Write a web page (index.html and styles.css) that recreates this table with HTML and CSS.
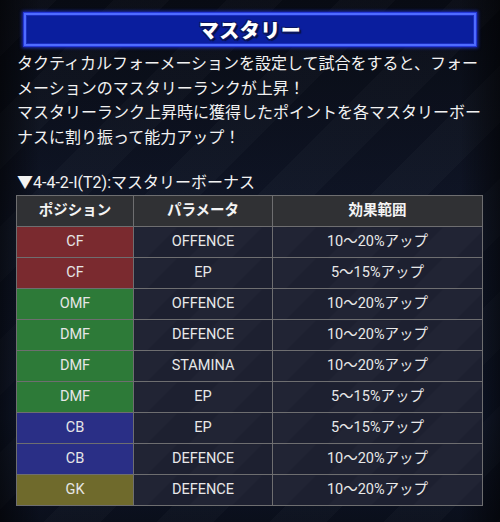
FILE: index.html
```html
<!DOCTYPE html>
<html lang="ja">
<head>
<meta charset="utf-8">
<title>マスタリー</title>
<link rel="stylesheet" href="styles.css">
</head>
<body>
<div class="page">
  <div class="title-bar"><span class="title-text">マスタリー</span></div>
  <p class="intro">タクティカルフォーメーションを設定して試合をすると、フォー<br>メーションのマスタリーランクが上昇！<br>マスタリーランク上昇時に獲得したポイントを各マスタリーボー<br>ナスに割り振って能力アップ！</p>
  <h2 class="section-head">▼4-4-2-I(T2):マスタリーボーナス</h2>
  <table class="bonus">
    <thead>
      <tr><th class="c1">ポジション</th><th class="c2">パラメータ</th><th class="c3">効果範囲</th></tr>
    </thead>
    <tbody>
      <tr><td class="pos red">CF</td><td>OFFENCE</td><td>10〜20%アップ</td></tr>
      <tr><td class="pos red">CF</td><td>EP</td><td>5〜15%アップ</td></tr>
      <tr><td class="pos green">OMF</td><td>OFFENCE</td><td>10〜20%アップ</td></tr>
      <tr><td class="pos green">DMF</td><td>DEFENCE</td><td>10〜20%アップ</td></tr>
      <tr><td class="pos green">DMF</td><td>STAMINA</td><td>10〜20%アップ</td></tr>
      <tr><td class="pos green">DMF</td><td>EP</td><td>5〜15%アップ</td></tr>
      <tr><td class="pos blue">CB</td><td>EP</td><td>5〜15%アップ</td></tr>
      <tr><td class="pos blue">CB</td><td>DEFENCE</td><td>10〜20%アップ</td></tr>
      <tr><td class="pos olive">GK</td><td>DEFENCE</td><td>10〜20%アップ</td></tr>
    </tbody>
  </table>
</div>
</body>
</html>
```
FILE: styles.css
```css
html, body {
  margin: 0;
  padding: 0;
}
body {
  width: 500px;
  height: 522px;
  overflow: hidden;
  font-family: Roboto, "Noto Sans CJK JP", sans-serif;
  color: #f2f2f2;
  background:
    linear-gradient(90deg, rgba(0,0,0,0.55) 0%, rgba(0,0,0,0) 8%, rgba(0,0,0,0) 92%, rgba(0,0,0,0.55) 100%),
    repeating-linear-gradient(135deg, rgba(255,255,255,0.018) 0px, rgba(255,255,255,0.018) 40px, rgba(0,0,0,0.03) 40px, rgba(0,0,0,0.03) 80px),
    linear-gradient(180deg, #080b14 0%, #101729 45%, #111a30 80%, #0a0f1c 100%);
}
.page {
  padding-top: 13px;
}
.title-bar {
  margin: 0 24px;
  height: 29px;
  border: 2px solid #4f6cff;
  box-shadow: 0 0 0 1px #2538d8, 0 0 3px 2px #1a2ab8, inset 0 0 0 1px #1a2ec0;
  background: #0a1e9e;
  display: flex;
  align-items: center;
  justify-content: center;
}
.title-text {
  font-family: "Noto Sans CJK JP", sans-serif;
  font-weight: 900;
  font-size: 20px;
  line-height: 1;
  color: #ffffff;
  letter-spacing: 0.5px;
  text-shadow:
    1px 1px 0 #0b1660, -1px -1px 0 #0b1660, 1px -1px 0 #0b1660, -1px 1px 0 #0b1660,
    0 2px 0 #0b1660, 2px 2px 1px #06103f;
}
.intro {
  margin: 6px 0 0;
  padding: 0 10px 0 17px;
  font-size: 16px;
  line-height: 24.5px;
  white-space: nowrap;
}
.section-head {
  margin: 21px 0 0;
  padding-left: 17px;
  font-size: 16px;
  font-weight: 400;
  line-height: 24px;
}
.bonus {
  margin-left: 16px;
  width: 467px;
  border-collapse: collapse;
  table-layout: fixed;
  border: 1px solid #6e6e70;
}
.bonus th, .bonus td {
  border: 1px solid #6e6e70;
  height: 30px;
  padding: 0;
  text-align: center;
  vertical-align: middle;
  font-size: 14.5px;
  line-height: 1;
}
.bonus th {
  background: #303134;
  font-weight: 700;
  color: #f4f4f4;
}
.bonus td {
  background:
    repeating-linear-gradient(135deg, rgba(255,255,255,0.02) 0px, rgba(255,255,255,0.02) 30px, rgba(0,0,0,0) 30px, rgba(0,0,0,0) 60px),
    #1d2030;
  color: #e8e8e8;
}
.c1 { width: 116px; }
.c2 { width: 138px; }
.bonus td.pos { color: #e6e6e6; }
.bonus td.red { background: #7a2a2f; }
.bonus td.green { background: #2d7a38; }
.bonus td.blue { background: #2a2f86; }
.bonus td.olive { background: #6f6a2c; }
```
